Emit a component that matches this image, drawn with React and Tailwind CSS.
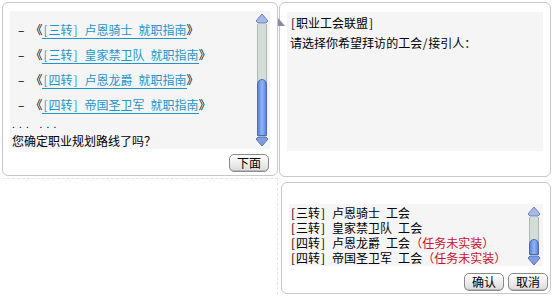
import React from "react";

const font = { fontFamily: '"Noto Sans CJK SC", "Liberation Sans", sans-serif' };

// ASCII chars take a fixed half-width cell, like a bitmap CJK font
function T({ children }) {
  return [...children].map((ch, i) =>
    ch.charCodeAt(0) < 128 ? (
      <span key={i} className="inline-block w-[6px] text-center leading-none">
        {ch === " " ? "\u00a0" : ch}
      </span>
    ) : (
      <React.Fragment key={i}>{ch}</React.Fragment>
    )
  );
}

function ScrollBar({ thumbTop, height }) {
  return (
    <div className="flex flex-col items-center w-[14px]" style={{ height }}>
      <svg width="14" height="11" viewBox="0 0 14 11">
        <path d="M7 1 L13 8 L11 10 L3 10 L1 8 Z" fill="#a9b9e6" stroke="#6c7fb8" strokeWidth="1" />
      </svg>
      <div className="flex-1 w-[10px] bg-[#d4dcd8] border-x border-[#aab8b2] relative">
        <div
          className="absolute left-[-1px] right-[-1px] bottom-0 rounded-t-[5px] bg-gradient-to-r from-[#5b85d8] via-[#93b4f2] to-[#5b85d8] border border-[#4a6cb8]"
          style={{ top: thumbTop }}
        />
      </div>
      <svg width="14" height="11" viewBox="0 0 14 11">
        <path d="M7 10 L13 3 L11 1 L3 1 L1 3 Z" fill="#7f9de0" stroke="#5b72b0" strokeWidth="1" />
      </svg>
    </div>
  );
}

function Btn({ children }) {
  return (
    <div className="h-[18px] px-[7px] flex items-center justify-center rounded-[5px] border border-[#8a8a8a] bg-gradient-to-b from-white to-[#dcdcdc] text-[12px] leading-none text-black shadow-[inset_0_-1px_0_#bbb]">
      {children}
    </div>
  );
}

const guides = [
  "[三转] 卢恩骑士 就职指南",
  "[三转] 皇家禁卫队 就职指南",
  "[四转] 卢恩龙爵 就职指南",
  "[四转] 帝国圣卫军 就职指南",
];

const guilds = [
  ["[三转] 卢恩骑士 工会", false],
  ["[三转] 皇家禁卫队 工会", false],
  ["[四转] 卢恩龙爵 工会", true],
  ["[四转] 帝国圣卫军 工会", true],
];

export default function App() {
  return (
    <div className="w-[553px] h-[297px] bg-white overflow-hidden text-[12px] text-black" style={font}>
      <div className="grid grid-cols-[276px_1fr] gap-x-[1px] pt-[2px] pl-[2px] pr-[2px]">
        {/* left dialog */}
        <div className="h-[174px] rounded-[6px] border border-[#c8c8c8] bg-white flex flex-col px-[7px] pt-[8px] pb-[3px]">
          <div className="flex h-[138px] bg-[#f5f5f5]">
            <div className="flex-1 pl-[8px] pt-[9px] flex flex-col">
              {guides.map((t) => (
                <div key={t} className="h-[26px] leading-[20px] whitespace-nowrap">
                  <span className="mr-[6px]">–</span>
                  <span>《</span>
                  <span className="text-[#1f96c9] border-b border-[#1f96c9]">
                    <T>{t}</T>
                  </span>
                  <span>》</span>
                </div>
              ))}
              <div className="-ml-[6px] leading-[12px] mt-[-2px] text-[10px] tracking-[1px]">. . .&nbsp;&nbsp;&nbsp;. . .</div>
              <div className="-ml-[6px] leading-[16px] mt-[3px]">您确定职业规划路线了吗？</div>
            </div>
            <div className="pt-[2px] pr-[1px]">
              <ScrollBar thumbTop={55} height={134} />
            </div>
          </div>
          <div className="flex justify-end mt-[5px] pr-[1px]">
            <Btn>下面</Btn>
          </div>
        </div>

        {/* right dialog */}
        <div className="relative h-[175px] rounded-[6px] border border-[#c8c8c8] bg-white px-[7px] pt-[9px]">
          <svg className="absolute left-[-2px] top-[15px]" width="8" height="10" viewBox="0 0 8 10">
            <path d="M0 0 L7 8 L0 8 Z" fill="#8a8aa0" />
          </svg>
          <div className="h-[139px] bg-[#f5f5f5] pl-[3px] pt-[1px] leading-[20px]">
            <div><T>[职业工会联盟]</T></div>
            <div><T>请选择你希望拜访的工会/接引人：</T></div>
          </div>
        </div>

        {/* lower left faint frame */}
        <div className="h-[117px] mt-[1px] border-t border-r border-dashed border-[#e4e4e4]" />

        {/* lower right dialog */}
        <div className="mt-[5px] h-[112px] rounded-[6px] border border-[#c8c8c8] bg-white flex flex-col px-[7px] pt-[21px] pb-[2px] ml-[2px]">
          <div className="flex h-[63px] bg-[#f5f5f5]">
            <div className="flex-1 pl-[1px] pt-[1px] leading-[15px]">
              {guilds.map(([t, red]) => (
                <div key={t} className="whitespace-nowrap">
                  <T>{t}</T>
                  {red && <span className="text-[#c8102e]">（任务未实装）</span>}
                </div>
              ))}
            </div>
            <div className="pt-[2px] pr-[2px]">
              <ScrollBar thumbTop={22} height={60} />
            </div>
          </div>
          <div className="flex justify-end gap-[4px] mt-[7px] -mr-[5px]">
            <Btn>确认</Btn>
            <Btn>取消</Btn>
          </div>
        </div>
      </div>
    </div>
  );
}
